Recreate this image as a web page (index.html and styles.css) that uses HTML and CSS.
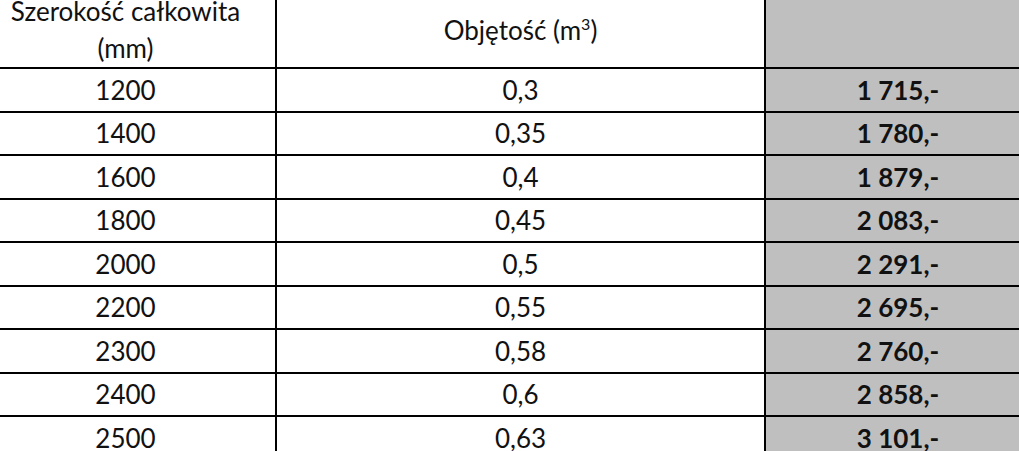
FILE: index.html
```html
<!DOCTYPE html>
<html lang="pl">
<head>
    <meta charset="UTF-8">
    <meta name="viewport" content="width=device-width, initial-scale=1.0">
    <title>Cennik - szerokość i objętość</title>
    <link rel="stylesheet" href="styles.css">
</head>
<body>
    <table class="price-table">
        <colgroup>
            <col class="col-width">
            <col class="col-volume">
            <col class="col-price">
        </colgroup>
        <thead>
            <tr>
                <th>Szerokość całkowita<br>(mm)</th>
                <th>Objętość (m<sup>3</sup>)</th>
                <th class="price"></th>
            </tr>
        </thead>
        <tbody>
            <tr><td>1200</td><td>0,3</td><td class="price">1 715,-</td></tr>
            <tr><td>1400</td><td>0,35</td><td class="price">1 780,-</td></tr>
            <tr><td>1600</td><td>0,4</td><td class="price">1 879,-</td></tr>
            <tr><td>1800</td><td>0,45</td><td class="price">2 083,-</td></tr>
            <tr><td>2000</td><td>0,5</td><td class="price">2 291,-</td></tr>
            <tr><td>2200</td><td>0,55</td><td class="price">2 695,-</td></tr>
            <tr><td>2300</td><td>0,58</td><td class="price">2 760,-</td></tr>
            <tr><td>2400</td><td>0,6</td><td class="price">2 858,-</td></tr>
            <tr><td>2500</td><td>0,63</td><td class="price">3 101,-</td></tr>
        </tbody>
    </table>
</body>
</html>
```

FILE: styles.css
```css
* {
    margin: 0;
    padding: 0;
    box-sizing: border-box;
}

body {
    background-color: #ffffff;
    color: #000000;
    font-family: Lato, 'Open Sans', sans-serif;
    overflow: hidden;
}

.price-table {
    border-collapse: collapse;
    table-layout: fixed;
    width: 1056px;
    margin-left: -26px;
    margin-top: -9px;
    font-size: 26px;
    color: #111111;
}

.col-width {
    width: 301px;
}

.col-volume {
    width: 489px;
}

.col-price {
    width: 266px;
}

th,
td {
    border: 2px solid #000000;
    text-align: center;
    vertical-align: middle;
    font-weight: 400;
}

th {
    height: 76px;
    line-height: 37px;
}

td {
    height: 43.5px;
    line-height: 30px;
}

sup {
    font-size: 16px;
    line-height: 0;
    vertical-align: 10px;
}

.price {
    background-color: #bfbfbf;
}

td.price {
    font-weight: 700;
}
```
